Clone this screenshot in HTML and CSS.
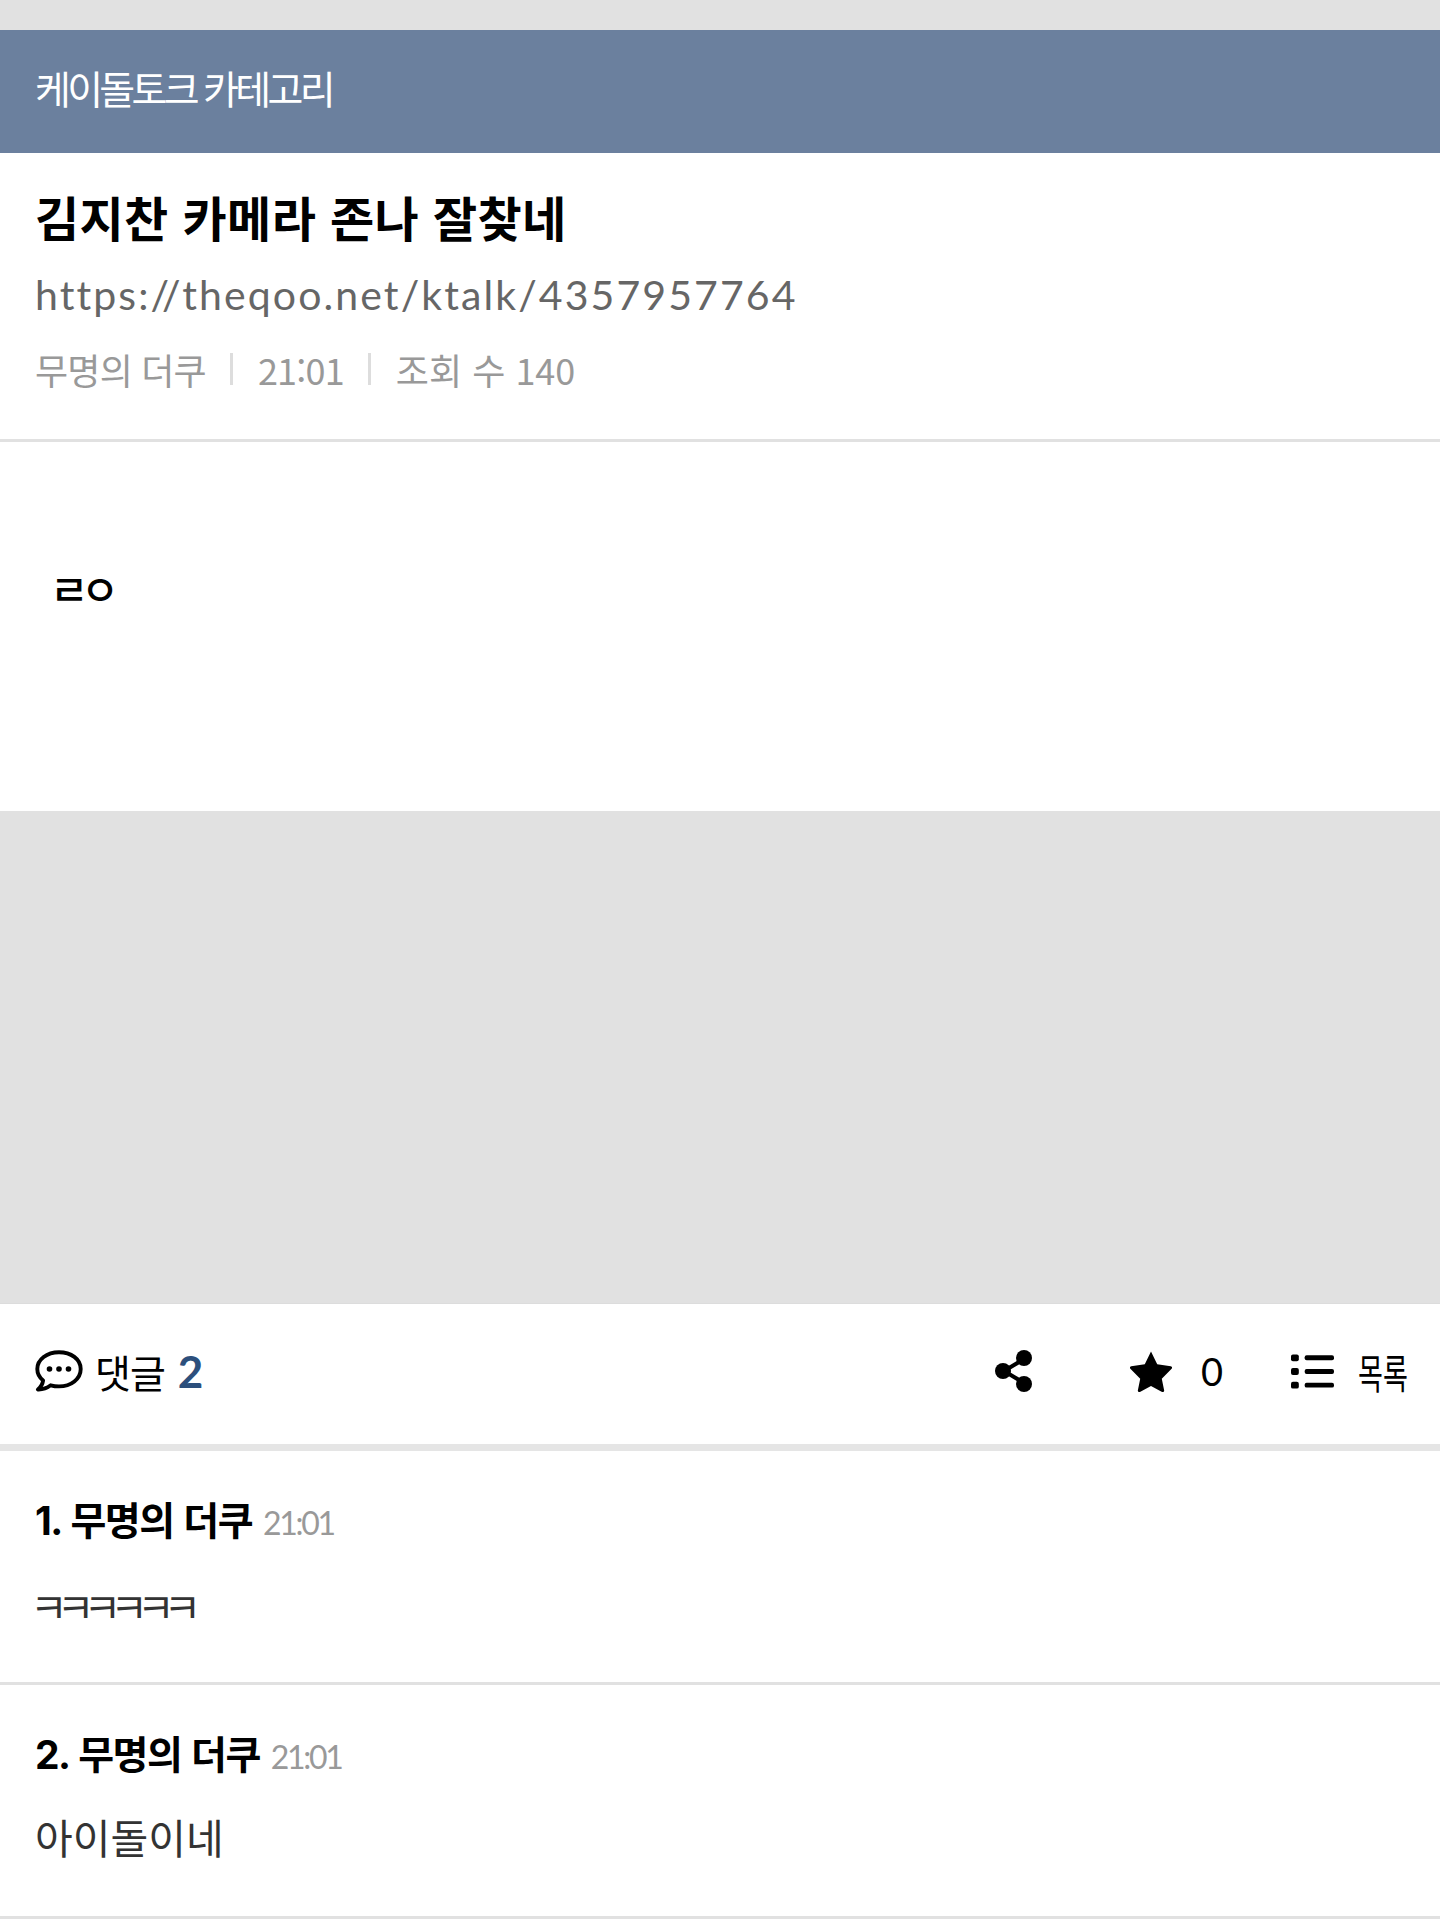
FILE: index.html
```html
<!DOCTYPE html>
<html lang="ko">
<head>
<meta charset="utf-8">
<title>김지찬 카메라 존나 잘찾네</title>
<link rel="stylesheet" href="styles.css">
</head>
<body>
<div class="page">
  <header class="cat-bar"><span class="cat-name">케이돌토크 카테고리</span></header>
  <section class="post-head">
    <h1 class="post-title">김지찬 카메라 존나 잘찾네</h1>
    <div class="post-url">https://theqoo.net/ktalk/4357957764</div>
    <div class="post-meta">
      <span>무명의 더쿠</span><i class="sep"></i><span>21:01</span><i class="sep"></i><span class="m-views">조회 수 140</span>
    </div>
  </section>
  <section class="post-body"><p class="post-text">ㄹㅇ</p></section>
  <div class="ad-gap"></div>
  <section class="toolbar">
    <div class="tb-left">
      <svg class="ico-chat" viewBox="0 0 48 42" aria-hidden="true"><path d="M24 2.2C12 2.2 2.3 9.6 2.3 19c0 4.4 2.2 8.500 5.800 11.500-.4 3-1.900 6.300-5.200 9 4.800.2 9.500-1.700 12.800-4.200 2.600.7 5.300 1.100 8.300 1.100 12 0 21.700-7.500 21.700-17.400S36 2.200 24 2.200Z" fill="none" stroke="#000" stroke-width="3.900" stroke-linejoin="round"/><circle cx="14.500" cy="19" r="2.800"/><circle cx="24" cy="19" r="2.800"/><circle cx="33.500" cy="19" r="2.800"/></svg>
      <span class="tb-label">댓글</span><span class="tb-count">2</span>
    </div>
    <div class="tb-right">
      <svg class="ico-share" viewBox="0 0 38 42" aria-hidden="true"><path d="M29 9 9 21l20 12" fill="none" stroke="#000" stroke-width="4"/><circle cx="29" cy="8" r="8"/><circle cx="8" cy="21" r="8"/><circle cx="29" cy="34" r="8"/></svg>
      <svg class="ico-star" viewBox="0 0 46 44" aria-hidden="true"><path d="M23 1.500 29.500 15l14.200 2c1.300.2 1.800 1.700.9 2.600L34.300 30l2.500 12.300c.2 1.300-1.100 2.200-2.200 1.600L23 37.700l-11.600 6.200c-1.100.6-2.400-.3-2.200-1.600L11.700 30 1.400 19.600c-.9-.9-.4-2.400.9-2.600L16.500 15 23 1.500Z"/></svg>
      <span class="tb-star-count">0</span>
      <svg class="ico-list" viewBox="0 0 44 36" aria-hidden="true"><rect x="0" y="1" width="8" height="7" rx="2"/><rect x="0" y="15" width="8" height="7" rx="2"/><rect x="0" y="29" width="8" height="7" rx="2"/><rect x="14" y="2" width="30" height="5" rx="2"/><rect x="14" y="16" width="30" height="5" rx="2"/><rect x="14" y="30" width="30" height="5" rx="2"/></svg>
      <span class="tb-list-label">목록</span>
    </div>
  </section>
  <section class="comment">
    <div class="c-head"><span class="c-author">1. 무명의 더쿠</span><span class="c-time">21:01</span></div>
    <p class="c-text c-jamo">ㅋㅋㅋㅋㅋㅋ</p>
  </section>
  <section class="comment">
    <div class="c-head"><span class="c-author">2. 무명의 더쿠</span><span class="c-time">21:01</span></div>
    <p class="c-text">아이돌이네</p>
  </section>
</div>
</body>
</html>
```
FILE: styles.css
```css
* { box-sizing: border-box; }
html, body { margin: 0; padding: 0; background: #fff; }
body { font-family: "Noto Sans CJK KR", "Lato", "Noto Sans", sans-serif; color: #000; }
.page { width: 1440px; height: 1930px; overflow: hidden; background: #fff; padding-top: 30px; box-shadow: inset 0 30px 0 #e1e1e1; }
.cat-bar { height: 123px; background: #6b809e; padding: 0 35px 8px; display: flex; align-items: center; }
.cat-name { color: #fff; font-size: 39px; letter-spacing: -3.7px; line-height: 1; font-weight: 400; }
.post-head { height: 289px; padding: 33px 35px 0; border-bottom: 3px solid #e1e1e1; }
.post-title { margin: 0; font-size: 48px; line-height: 60px; font-weight: 700; letter-spacing: 0.4px; }
.post-url { margin-top: 25px; font-family: "Lato", sans-serif; font-size: 41px; line-height: 48px; color: #666; letter-spacing: 2.1px; }
.post-meta { margin-top: 27px; display: flex; align-items: center; font-size: 36px; line-height: 46px; color: #999; font-weight: 400; letter-spacing: -0.8px; }
.m-views { letter-spacing: 0; }
.sep { width: 3px; height: 32px; background: #ddd; margin: 0 25px 0 24px; }
.post-body { height: 369px; padding: 122px 35px 0 50px; }
.post-text { margin: 0; font-size: 42px; line-height: 48px; font-weight: 500; letter-spacing: -8px; }
.ad-gap { height: 492px; background: #e1e1e1; }
.toolbar { height: 148px; padding: 0 33px 7px 35px; display: flex; justify-content: space-between; align-items: center; border-top: 1px solid #dcdcdc; border-bottom: 7px solid #e5e5e5; }
.tb-left, .tb-right { display: flex; align-items: center; }
.ico-chat { width: 48px; height: 42px; margin-right: 12px; }
.tb-label { font-size: 39px; line-height: 48px; letter-spacing: -1px; font-weight: 400; }
.tb-count { margin-left: 13px; font-size: 44px; line-height: 48px; font-weight: 700; color: #2c4f7c; font-family: "Lato", sans-serif; }
.ico-share { width: 38px; height: 42px; margin-right: 96px; }
.ico-star { width: 44px; height: 42px; margin-right: 28px; }
.tb-star-count { font-family: "Lato", sans-serif; font-size: 38px; line-height: 48px; margin-right: 68px; font-weight: 400; }
.ico-list { width: 43px; height: 36px; margin-right: 24px; }
.tb-list-label { display: inline-block; width: 49px; white-space: nowrap; font-size: 41px; line-height: 48px; transform: scaleX(0.66); transform-origin: left center; }
.comment { height: 234px; padding: 40px 35px 0; border-bottom: 3px solid #e1e1e1; }
.c-head { display: flex; align-items: baseline; }
.c-author { font-family: "Inter", "Noto Sans CJK KR", sans-serif; font-size: 39px; line-height: 60px; font-weight: 700; letter-spacing: -1.5px; word-spacing: 2px; }
.c-time { margin-left: 11px; font-size: 32px; color: #999; letter-spacing: -2.300px; font-family: "Lato", sans-serif; }
.c-text { margin: 25px 0 0; font-size: 41px; line-height: 52px; color: #333; font-weight: 400; }
.c-jamo { margin: 28px 0 0 -5px; letter-spacing: -11px; }
```
